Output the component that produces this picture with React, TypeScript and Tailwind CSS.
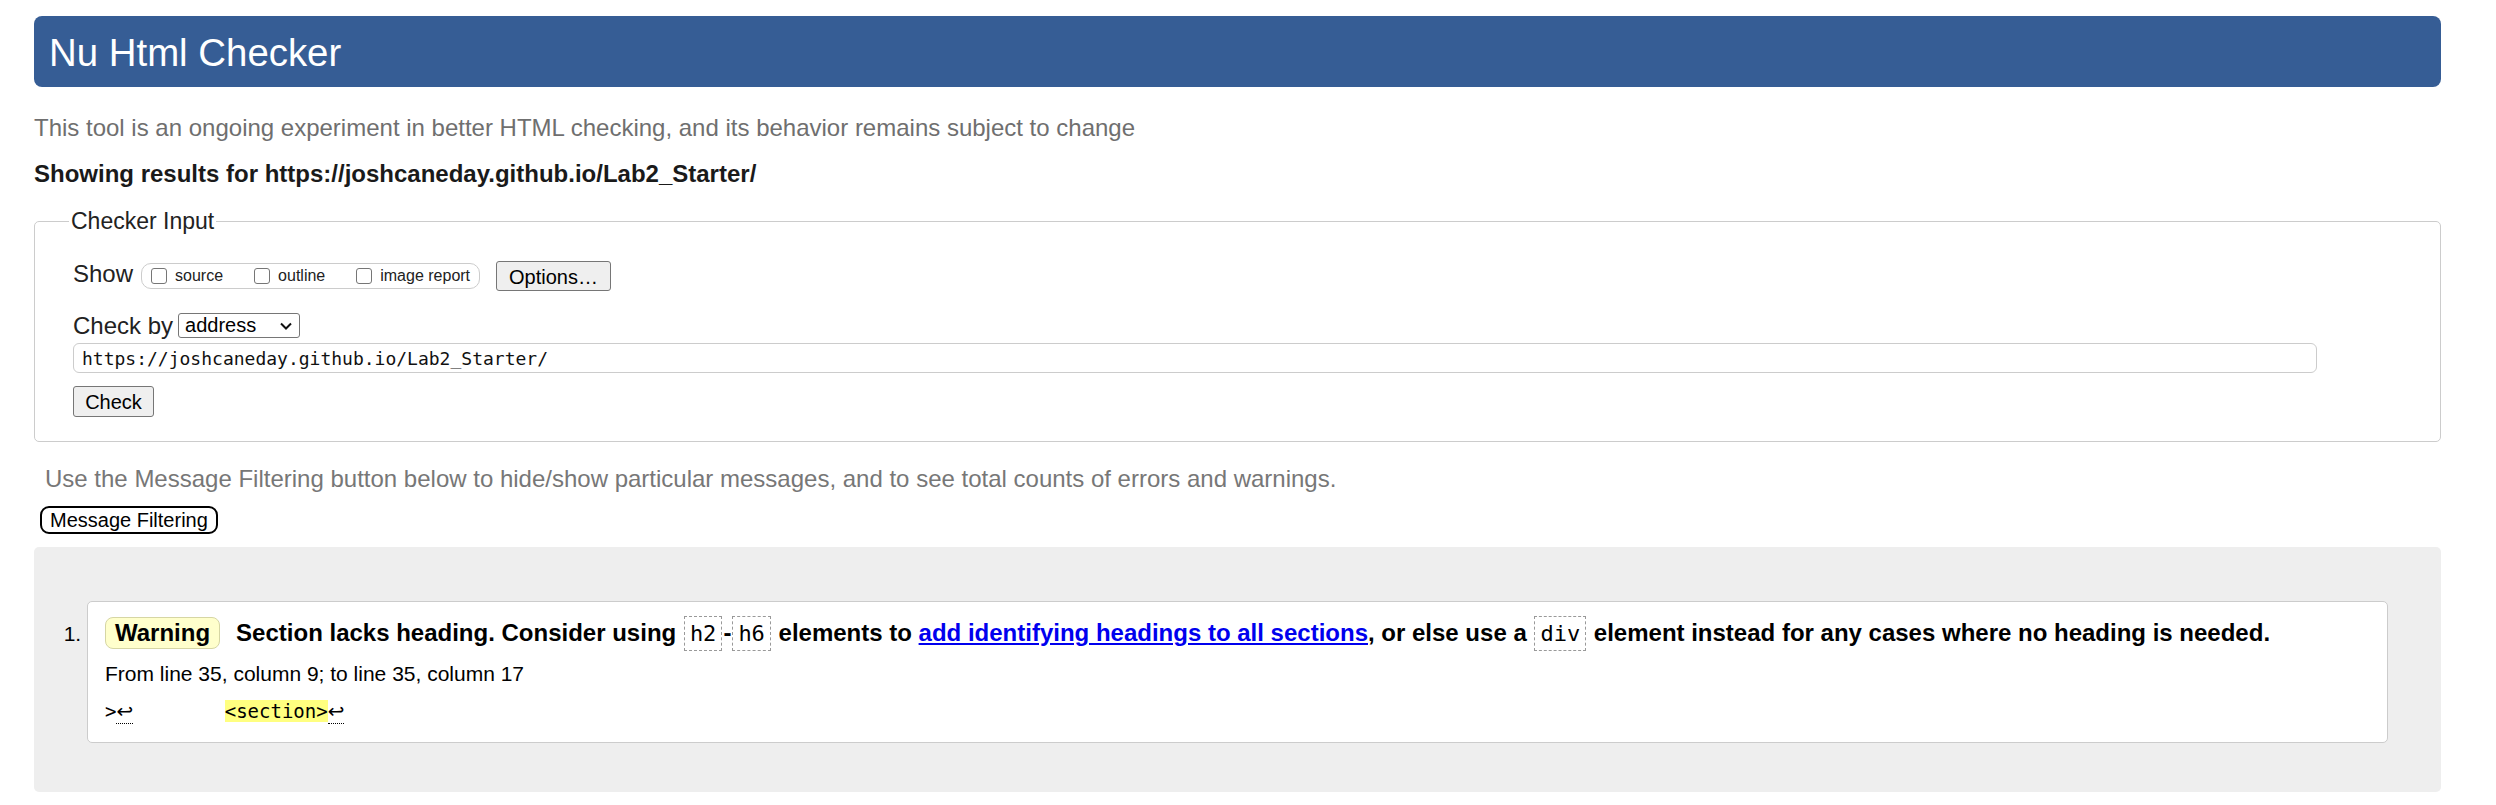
const Checkbox = ({ label }: { label: string }) => (
  <label className="inline-flex items-center">
    <input
      type="checkbox"
      className="h-[16px] w-[16px] appearance-none rounded-[3px] border border-[#767676] bg-white"
    />
    <span className="ml-[8px]">{label}</span>
  </label>
);

const Code = ({ children }: { children: string }) => (
  <code className="mx-[1px] inline-block border border-dashed border-[#999] px-[5px] font-['DejaVu_Sans_Mono',monospace] text-[22px] font-normal leading-[33px]">
    {children}
  </code>
);

const LineBreak = () => (
  <span className="border-b border-dotted border-black font-['DejaVu_Sans',sans-serif] text-[20px]">↩</span>
);

export default function App() {
  return (
    <div className="min-h-screen bg-white pt-[16px] pr-[55px] pb-[12px] pl-[34px] font-['Liberation_Sans',Arial,Helvetica,sans-serif] text-[#222]">
      <h1 className="h-[71px] rounded-[8px] bg-[#365d95] pl-[15px] text-[38.4px] font-normal leading-[73px] text-white">
        Nu Html Checker
      </h1>

      <p className="mt-[27px] text-[24px] leading-[28px] text-[#6f6f6f]">
        This tool is an ongoing experiment in better HTML checking, and its behavior remains subject to change
      </p>
      <p className="mt-[18px] text-[24px] font-bold leading-[28px] text-[#1a1a1a]">
        Showing results for https://joshcaneday.github.io/Lab2_Starter/
      </p>

      <fieldset className="mt-[20px] rounded-[5px] border border-[#ccc]">
        <legend className="ml-[34px] px-[2px] text-[23px] leading-[26px]">Checker Input</legend>
        <div className="pt-[26px] pb-[24px] pl-[38px]">
          {/* show options */}
          <div className="flex h-[32px] items-center">
            <span className="pb-[4px] text-[24px] leading-[28px]">Show</span>
            <div className="ml-[8px] flex h-[26px] items-center gap-[31px] rounded-[10px] border border-[#ccc] pr-[9px] pl-[9px] text-[16px] leading-[18px]">
              <Checkbox label="source" />
              <Checkbox label="outline" />
              <Checkbox label="image report" />
            </div>
            <button className="ml-[16px] h-[30px] rounded-[3px] border border-[#767676] bg-[#efefef] px-[12px] text-[20px] text-black">
              Options…
            </button>
          </div>

          <div className="mt-[20px] flex h-[28px] items-center">
            <span className="text-[24px] leading-[28px]">Check by</span>
            <div className="relative ml-[5px]">
              <select className="h-[25px] w-[122px] appearance-none rounded-[3px] border border-[#767676] bg-white pl-[6px] text-[20px] leading-[23px] text-black">
                <option>address</option>
              </select>
              <svg
                className="pointer-events-none absolute top-[9px] right-[8px]"
                width="12"
                height="8"
                viewBox="0 0 12 8"
                fill="none"
                stroke="#111"
                strokeWidth="2"
              >
                <path d="M1 1.5l5 5 5-5" />
              </svg>
            </div>
          </div>

          <input
            readOnly
            value="https://joshcaneday.github.io/Lab2_Starter/"
            className="mt-[3px] block h-[30px] w-[2244px] rounded-[6px] border border-[#ccc] px-[8px] font-['DejaVu_Sans_Mono',monospace] text-[18px] text-[#111]"
          />

          <button className="mt-[13px] block h-[31px] w-[81px] rounded-[3px] border border-[#767676] bg-[#efefef] text-[20px] text-black">
            Check
          </button>
        </div>
      </fieldset>

      <p className="mt-[23px] ml-[11px] text-[24px] leading-[28px] text-[#777]">
        Use the Message Filtering button below to hide/show particular messages, and to see total counts of errors and warnings.
      </p>
      <button className="mt-[13px] ml-[6px] block h-[28px] rounded-[9px] border-2 border-black bg-white px-[8px] text-[20px] leading-none text-black">
        Message Filtering
      </button>

      {/* results */}
      <div className="mt-[13px] rounded-[5px] bg-[#eee] px-[53px] pt-[54px] pb-[49px]">
        <ol className="list-outside list-decimal">
          <li className="rounded-[5px] border border-[#ccc] bg-white pt-[13px] pb-[17px] pl-[17px] text-[21px] text-black">
            <p className="text-[24px] leading-[36px] font-bold">
              <span className="mr-[16px] inline-block rounded-[8px] border border-[#d6d6a4] bg-[#ffffcc] px-[9px] leading-[30px]">
                Warning
              </span>
              Section lacks heading. Consider using <Code>h2</Code>-<Code>h6</Code> elements to{" "}
              <a href="#" className="text-[#0000ee] underline">
                add identifying headings to all sections
              </a>
              , or else use a <Code>div</Code> element instead for any cases where no heading is needed.
            </p>
            <p className="mt-[9px] leading-[28px]">From line 35, column 9; to line 35, column 17</p>
            <p className="mt-[9px] font-['DejaVu_Sans_Mono',monospace] text-[19px] leading-[28px] whitespace-pre">
              {">"}
              <LineBreak />
              {"        "}
              <mark className="bg-[#ffff80] text-black">{"<section>"}</mark>
              <LineBreak />
            </p>
          </li>
        </ol>
      </div>
    </div>
  );
}
